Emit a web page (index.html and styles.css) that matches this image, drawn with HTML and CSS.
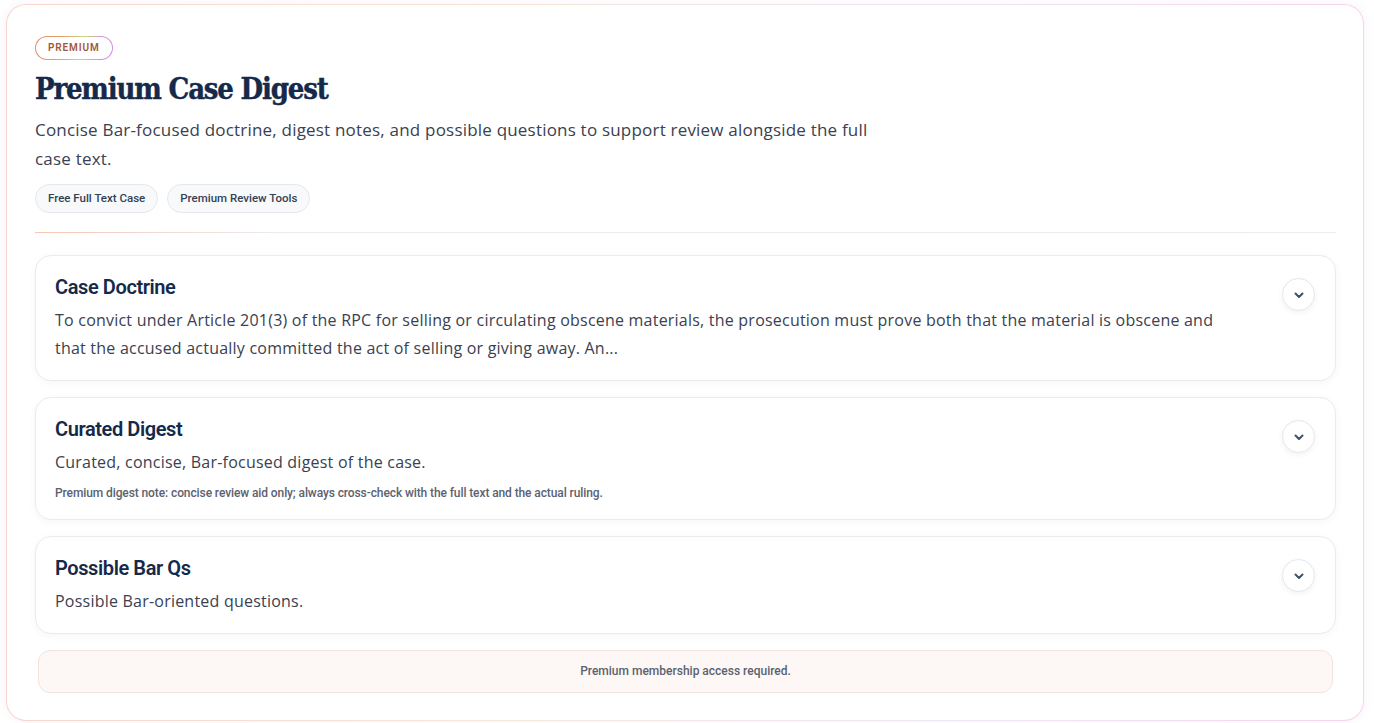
FILE: index.html
```html
<!DOCTYPE html>
<html lang="en">
<head>
<meta charset="utf-8">
<title>Premium Case Digest</title>
<link rel="stylesheet" href="styles.css">
</head>
<body>
<div class="shell">
  <section class="panel">
    <div class="badge"><span class="badge-inner">PREMIUM</span></div>
    <h1 class="title">Premium Case Digest</h1>
    <p class="lead">Concise Bar-focused doctrine, digest notes, and possible questions to support review alongside the full case text.</p>
    <div class="chips">
      <span class="chip">Free Full Text Case</span>
      <span class="chip">Premium Review Tools</span>
    </div>
    <div class="divider"></div>
    <div class="cards">
      <article class="card">
        <div class="card-body">
          <h2 class="card-title">Case Doctrine</h2>
          <p class="card-text">To convict under Article 201(3) of the RPC for selling or circulating obscene materials, the prosecution must prove both that the material is obscene and that the accused actually committed the act of selling or giving away. An...</p>
        </div>
        <button class="toggle" aria-label="Expand"><svg width="12" height="12" viewBox="0 0 12 12"><path d="M2.5 4.5 L6 8 L9.5 4.5" fill="none" stroke="#3f5168" stroke-width="2" stroke-linecap="round" stroke-linejoin="round"/></svg></button>
      </article>
      <article class="card">
        <div class="card-body">
          <h2 class="card-title">Curated Digest</h2>
          <p class="card-text">Curated, concise, Bar-focused digest of the case.</p>
          <p class="card-note">Premium digest note: concise review aid only; always cross-check with the full text and the actual ruling.</p>
        </div>
        <button class="toggle" aria-label="Expand"><svg width="12" height="12" viewBox="0 0 12 12"><path d="M2.5 4.5 L6 8 L9.5 4.5" fill="none" stroke="#3f5168" stroke-width="2" stroke-linecap="round" stroke-linejoin="round"/></svg></button>
      </article>
      <article class="card">
        <div class="card-body">
          <h2 class="card-title">Possible Bar Qs</h2>
          <p class="card-text">Possible Bar-oriented questions.</p>
        </div>
        <button class="toggle" aria-label="Expand"><svg width="12" height="12" viewBox="0 0 12 12"><path d="M2.5 4.5 L6 8 L9.5 4.5" fill="none" stroke="#3f5168" stroke-width="2" stroke-linecap="round" stroke-linejoin="round"/></svg></button>
      </article>
    </div>
    <div class="notice">Premium membership access required.</div>
  </section>
</div>
</body>
</html>
```
FILE: styles.css
```css
* { box-sizing: border-box; }
html, body { margin: 0; padding: 0; background: #ffffff; }
body { font-family: "Open Sans", "Noto Sans", sans-serif; color: #1f2937; }

.shell {
  padding: 4px 10px 2px 6px;
}

.panel {
  position: relative;
  height: 717px;
  border-radius: 20px;
  border: 1px solid transparent;
  background:
    linear-gradient(#ffffff, #ffffff) padding-box,
    linear-gradient(90deg, #f9d6cc 0%, #f7e6d8 35%, #efe6f6 70%, #f6d4ee 100%) border-box;
  box-shadow: 0 0 8px rgba(230, 200, 230, 0.25);
  padding: 31px 27px 0 28px;
}

.badge {
  display: flex;
  width: fit-content;
  padding: 1px;
  border-radius: 999px;
  background: linear-gradient(100deg, #e08a6a 0%, #e7a06c 35%, #c9d77a 60%, #d58ce8 85%, #c98ee6 100%);
}
.badge-inner {
  display: block;
  height: 22px;
  line-height: 22px;
  padding: 0 12px 0 12px;
  border-radius: 999px;
  background: #ffffff;
  font-family: "Roboto", sans-serif;
  font-size: 10px;
  font-weight: 600;
  letter-spacing: 0.9px;
  color: #a2573a;
}

.title {
  margin: 12px 0 0 0;
  font-family: "DejaVu Serif", serif;
  font-stretch: condensed;
  font-weight: 700;
  font-size: 29px;
  line-height: 34px;
  letter-spacing: -1.2px;
  color: #15294a;
  -webkit-text-stroke: 0.4px #15294a;
}

.lead {
  margin: 9px 0 0 0;
  max-width: 850px;
  font-size: 17px;
  letter-spacing: 0.2px;
  line-height: 29px;
  color: #3a4150;
}

.chips {
  display: flex;
  gap: 9px;
  margin-top: 11px;
}
.chip {
  height: 29px;
  line-height: 27px;
  padding: 0 12px;
  border-radius: 999px;
  border: 1px solid #e5e7eb;
  background: #f8f9fb;
  font-family: "Roboto", sans-serif;
  font-size: 11.5px;
  font-weight: 500;
  color: #334155;
}

.divider {
  height: 1px;
  margin-top: 19px;
  background: linear-gradient(90deg, #f5c6b3 0%, #eeeaea 18%, #ededee 100%);
}

.cards {
  display: flex;
  flex-direction: column;
  gap: 16px;
  margin-top: 22px;
}
.card {
  display: flex;
  align-items: flex-start;
  border: 1px solid #e9ebef;
  border-radius: 16px;
  background: #ffffff;
  box-shadow: 0 2px 8px rgba(15, 23, 42, 0.04);
  padding: 19px 20px 18px 19px;
}
.card-body { flex: 1; }
.card-title {
  margin: 0;
  font-family: "Roboto", sans-serif;
  font-weight: 600;
  font-size: 20px;
  line-height: 24px;
  letter-spacing: -0.4px;
  color: #15294a;
}
.card-text {
  margin: 7px 0 0 0;
  max-width: 1180px;
  font-size: 16px;
  letter-spacing: 0.22px;
  line-height: 28px;
  color: #3a4150;
}
.card-note {
  margin: 9px 0 0 0;
  font-family: "Roboto", sans-serif;
  font-size: 12px;
  font-weight: 500;
  line-height: 16px;
  color: #5b6270;
  letter-spacing: -0.1px;
}
.toggle {
  flex: none;
  width: 33px;
  height: 33px;
  margin-top: 3px;
  border-radius: 50%;
  border: 1px solid #e5e7eb;
  background: #ffffff;
  box-shadow: 0 2px 6px rgba(15, 23, 42, 0.05);
  display: flex;
  align-items: center;
  justify-content: center;
  padding: 0;
}

.notice {
  margin: 16px 3px 0 3px;
  height: 43px;
  line-height: 41px;
  border: 1px solid #f4e2dc;
  border-radius: 12px;
  background: #fdf8f5;
  text-align: center;
  font-family: "Roboto", sans-serif;
  font-size: 12px;
  font-weight: 500;
  color: #5b6270;
}
```
